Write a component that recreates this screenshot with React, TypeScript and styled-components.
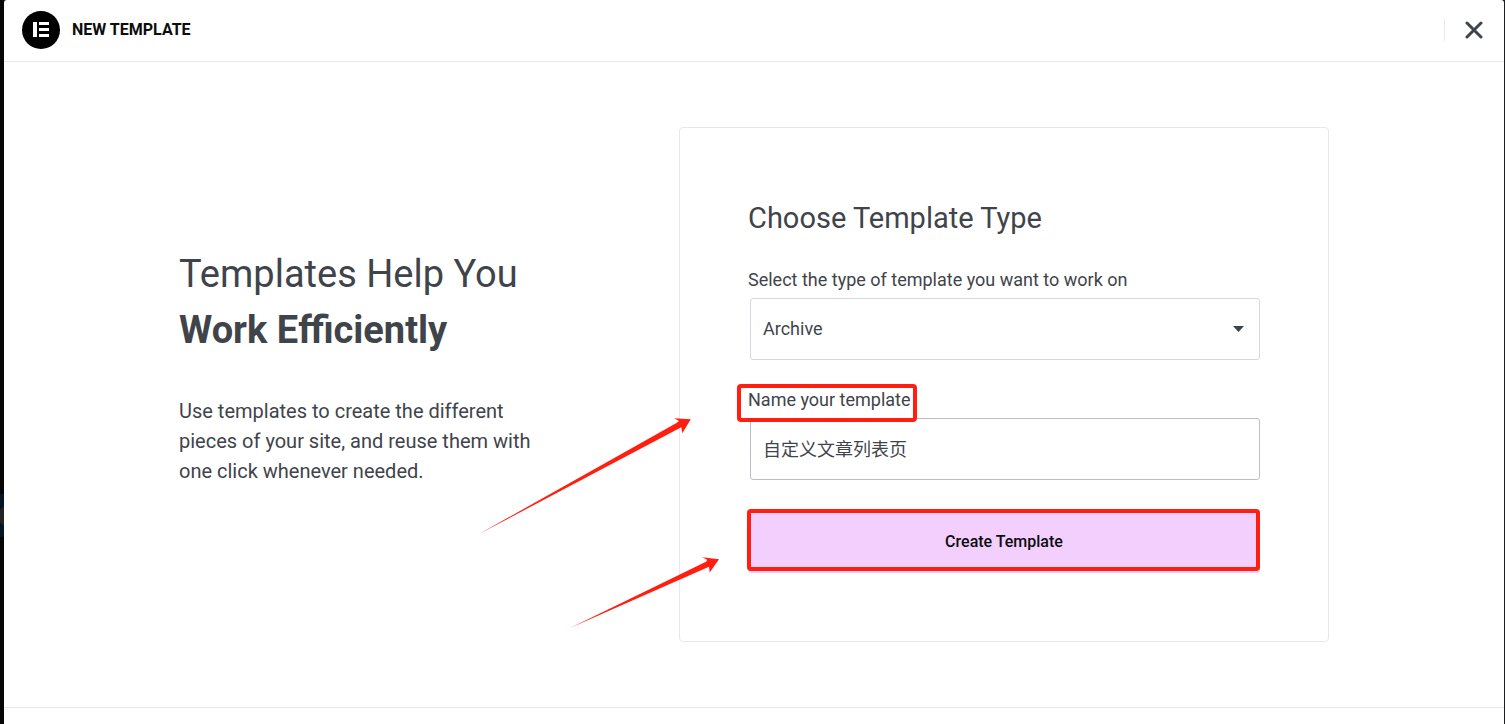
import React, { useState } from "react";
import styled, { createGlobalStyle, css } from "styled-components";

const ink = "#3f444b";
const line = "#e6e8ea";
const marker = "#ff1e10";

const GlobalStyle = createGlobalStyle`
  *, *::before, *::after { box-sizing: border-box; }
  body {
    margin: 0;
    background: #060606;
    color: ${ink};
    font-family: Roboto, "Noto Sans CJK SC", sans-serif;
  }
`;

const Backdrop = styled.div`
  display: flex;
  min-height: 100vh;
  padding-right: 1px;
  background: #1c1e20;
`;

const PageEdge = styled.div`
  display: flex;
  flex: none;
  align-items: flex-start;
  width: 4px;
  padding-top: 494px;
  background: #060606;
`;

const Modal = styled.section`
  display: flex;
  flex: 1;
  flex-direction: column;
  min-width: 0;
  border-radius: 3px 3px 0 0;
  background: #fff;
`;

const Header = styled.header`
  display: flex;
  align-items: center;
  justify-content: space-between;
  height: 62px;
  padding: 0 21px 2px 18px;
  border-bottom: 1px solid ${line};
`;

const Brand = styled.div`
  display: flex;
  align-items: center;
  gap: 12px;
`;

const BrandName = styled.h1`
  margin: 0;
  color: #0c0d0e;
  font-size: 16px;
  font-weight: 700;
  line-height: 24px;
`;

const HeaderActions = styled.div`
  display: flex;
  align-items: center;
  padding-left: 20px;
  border-left: 1px solid ${line};
`;

const IconButton = styled.button`
  display: block;
  height: 22px;
  padding: 2px 0;
  border: 0;
  background: none;
  cursor: pointer;
`;

const Main = styled.main`
  display: flex;
  align-items: center;
  justify-content: center;
  gap: 128px;
  padding: 65px 24px;
`;

const Intro = styled.div`
  flex: 0 1 372px;
  padding-bottom: 38px;
`;

const IntroTitle = styled.h2`
  margin: 0 0 38px;
  font-size: 38px;
  font-weight: 400;
  line-height: 56px;
  white-space: nowrap;

  strong {
    display: block;
    font-weight: 700;
  }
`;

const IntroText = styled.p`
  margin: 0;
  font-size: 20px;
  line-height: 30px;
`;

const Card = styled.form`
  position: relative;
  flex: 0 1 650px;
  padding: 70px 68px 68px;
  border: 1px solid ${line};
  border-radius: 4px;
`;

const CardTitle = styled.h2`
  margin: 0 0 30px;
  font-size: 29px;
  font-weight: 400;
  line-height: 40px;
`;

const Field = styled.div`
  display: flex;
  flex-direction: column;
  align-items: flex-start;
  gap: 6px;
  margin-bottom: 28px;
`;

const Label = styled.label`
  position: relative;
  font-size: 18px;
  line-height: 24px;
`;

const ControlBox = styled.div`
  position: relative;
  align-self: stretch;
  padding-left: 2px;
`;

const control = css`
  display: block;
  width: 100%;
  height: 62px;
  padding: 0 12px 2px;
  border-radius: 3px;
  outline: 0;
  background: #fff;
  color: ${ink};
  font-family: inherit;
  font-size: 18px;
`;

const Select = styled.select`
  ${control}
  appearance: none;
  border: 1px solid #d5d8dc;
`;

const TextInput = styled.input`
  ${control}
  border: 1px solid #babfc5;
`;

const Caret = styled.svg`
  position: absolute;
  top: 28px;
  right: 16px;
  pointer-events: none;
`;

const SubmitButton = styled.button`
  position: relative;
  display: block;
  width: 100%;
  height: 63px;
  margin-top: 30px;
  border: 0;
  border-radius: 3px;
  background: #f3cffd;
  color: #0c0d0e;
  font-family: inherit;
  font-size: 16px;
  font-weight: 500;
  cursor: pointer;
`;

const Highlight = styled.span<{ $inset: string }>`
  position: absolute;
  z-index: 1;
  inset: ${(p) => p.$inset};
  border: 4px solid ${marker};
  border-radius: 4px;
  pointer-events: none;
`;

const Arrows = styled.svg`
  position: absolute;
  top: 280px;
  left: -210px;
  pointer-events: none;
`;

const Footer = styled.footer`
  flex: 1;
  min-height: 17px;
  border-top: 1px solid ${line};
`;

const EdgeThumb = () => (
  <svg width="4" height="43" viewBox="0 0 4 43" aria-hidden="true">
    <path d="M0 0H4V43H0z" fill="#051522" />
    <path d="M0 16L4 12V32L0 28z" fill="#242424" />
  </svg>
);

const Logo = () => (
  <svg width="38" height="38" viewBox="0 0 38 38" aria-hidden="true">
    <circle cx="19" cy="19" r="19" fill="#000" />
    <path d="M11 11h4v15h-4zM17 11h10v3H17zM17 17h10v3H17zM17 23h10v3H17z" fill="#fff" />
  </svg>
);

export default function App() {
  const [type, setType] = useState("archive");
  const [name, setName] = useState("自定义文章列表页");

  return (
    <>
      <GlobalStyle />
      <Backdrop>
        <PageEdge>
          <EdgeThumb />
        </PageEdge>
        <Modal>
          <Header>
            <Brand>
              <Logo />
              <BrandName>NEW TEMPLATE</BrandName>
            </Brand>
            <HeaderActions>
              <IconButton type="button" aria-label="Close">
                <svg width="18" height="18" viewBox="0 0 18 18" aria-hidden="true">
                  <path d="M2 2L16 16M16 2L2 16" stroke={ink} strokeWidth="3" strokeLinecap="round" />
                </svg>
              </IconButton>
            </HeaderActions>
          </Header>
          <Main>
            <Intro>
              <IntroTitle>
                Templates Help You <strong>Work Efficiently</strong>
              </IntroTitle>
              <IntroText>
                Use templates to create the different pieces of your site, and reuse them with one click
                whenever needed.
              </IntroText>
            </Intro>
            <Card onSubmit={(e) => e.preventDefault()}>
              <CardTitle>Choose Template Type</CardTitle>
              <Field>
                <Label htmlFor="template-type">Select the type of template you want to work on</Label>
                <ControlBox>
                  <Select id="template-type" value={type} onChange={(e) => setType(e.target.value)}>
                    <option value="archive">Archive</option>
                  </Select>
                  <Caret width="11" height="6" viewBox="0 0 11 6" aria-hidden="true">
                    <path d="M0 0H11L5.5 6z" fill={ink} />
                  </Caret>
                </ControlBox>
              </Field>
              <Field>
                <Label htmlFor="template-name">
                  Name your template
                  <Highlight $inset="-4px -6px -10px -11px" />
                </Label>
                <ControlBox>
                  <TextInput
                    id="template-name"
                    type="text"
                    value={name}
                    onChange={(e) => setName(e.target.value)}
                  />
                </ControlBox>
              </Field>
              <SubmitButton type="submit">
                Create Template
                <Highlight $inset="-1px 0 2px -1px" />
              </SubmitButton>
              <Arrows width="260" height="230" viewBox="470 408 260 230" aria-hidden="true">
                <path
                  d="M479 534L676.5 423L679 421L674.3 418.2L690.8 419.2L682.3 433.2L681.3 427.3Z"
                  fill={marker}
                />
                <path
                  d="M570 628L706.5 561.5L707 559.8L702.3 557.3L719 559.3L709.7 572.5L709 566.7Z"
                  fill={marker}
                />
              </Arrows>
            </Card>
          </Main>
          <Footer />
        </Modal>
      </Backdrop>
    </>
  );
}
